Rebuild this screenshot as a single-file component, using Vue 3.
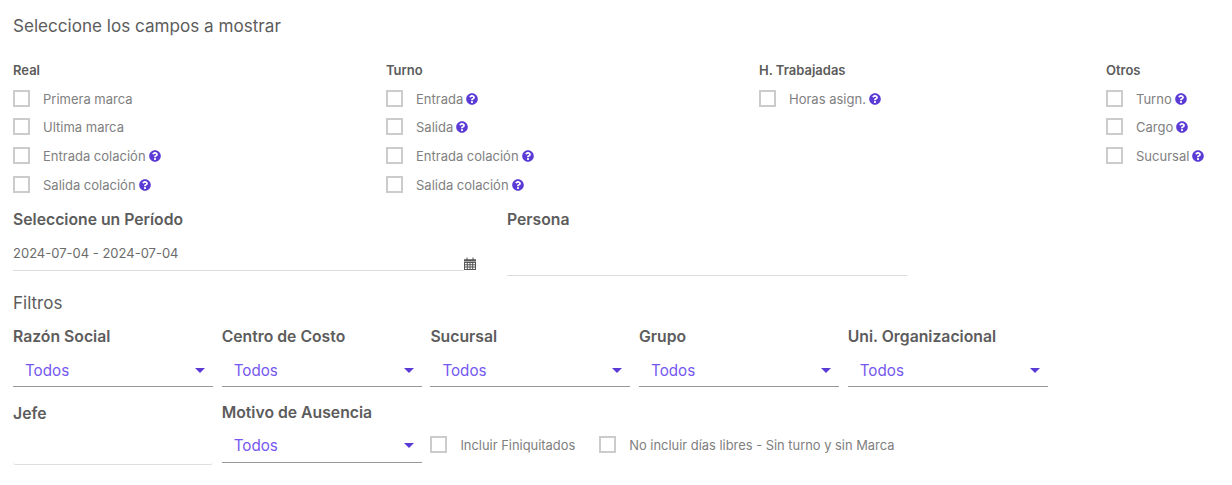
<script setup>
const columns = [
  { title: 'Real', width: 373, items: [['Primera marca', false], ['Ultima marca', false], ['Entrada colación', true], ['Salida colación', true]] },
  { title: 'Turno', width: 373, items: [['Entrada', true], ['Salida', true], ['Entrada colación', true], ['Salida colación', true]] },
  { title: 'H. Trabajadas', width: 347, items: [['Horas asign.', true]] },
  { title: 'Otros', width: 110, items: [['Turno', true], ['Cargo', true], ['Sucursal', true]] },
]
const filters = ['Razón Social', 'Centro de Costo', 'Sucursal', 'Grupo', 'Uni. Organizacional']
</script>

<template>
  <div class="page">
    <h2 class="title">Seleccione los campos a mostrar</h2>
    <div class="cols">
      <div v-for="c in columns" :key="c.title" class="col" :style="{ width: c.width + 'px' }">
        <div class="col-title">{{ c.title }}</div>
        <label v-for="it in c.items" :key="it[0]" class="check">
          <span class="box"></span>
          <span class="check-text">{{ it[0] }}</span>
          <svg v-if="it[1]" class="help" viewBox="0 0 512 512">
            <path fill="#5b3bd6" d="M504 256c0 137-111 248-248 248S8 393 8 256 119 8 256 8s248 111 248 248zM262.700 90c-54.500 0-89.300 23-116.600 63.800-3.500 5.300-2.400 12.400 2.700 16.300l34.700 26.300c5.200 3.900 12.600 3 16.700-2.100 17.900-22.700 30.100-35.800 57.300-35.800 20.400 0 45.700 13.100 45.700 32.900 0 15-12.400 22.700-32.600 34-23.600 13.200-54.800 29.700-54.800 70.900V300c0 6.600 5.400 12 12 12h56c6.600 0 12-5.400 12-12v-1.300c0-28.600 83.500-29.800 83.500-107.200C379.300 133.200 318.800 90 262.700 90zM256 339c-25.500 0-46.200 20.700-46.200 46.200 0 25.500 20.700 46.200 46.200 46.200s46.200-20.700 46.200-46.200c0-25.500-20.700-46.200-46.200-46.200z"/>
          </svg>
        </label>
      </div>
    </div>

    <div class="period-row">
      <div class="period">
        <div class="label">Seleccione un Período</div>
        <div class="date-field">
          <span class="date-input">2024-07-04 - 2024-07-04</span>
          <svg class="cal" viewBox="0 0 12 13">
            <path fill="#555" d="M0 2.200h12V4.500H0zM2.500.6h1v1.800h-1zM8.500.6h1v1.800h-1z"/>
            <path fill="#555" fill-rule="evenodd" d="M0 5h12v8H0zM1 6v1.300h1.800V6zm2.800 0v1.300h1.700V6zm2.700 0v1.300h1.700V6zm2.700 0v1.300H11V6zM1 8.300v1.300h1.800V8.300zm2.800 0v1.300h1.700V8.300zm2.700 0v1.300h1.700V8.300zm2.700 0v1.300H11V8.300zM1 10.600V12h1.800v-1.400zm2.800 0V12h1.700v-1.400zm2.700 0V12h1.700v-1.400zm2.700 0V12H11v-1.400z"/>
          </svg>
        </div>
      </div>
      <div class="persona">
        <div class="label">Persona</div>
        <div class="persona-input"></div>
      </div>
    </div>

    <div class="filtros">Filtros</div>
    <div class="filter-row">
      <div v-for="f in filters" :key="f" class="filter">
        <div class="label">{{ f }}</div>
        <div class="select"><span>Todos</span><i class="caret"></i></div>
      </div>
    </div>

    <div class="filter-row second">
      <div class="filter">
        <div class="label jefe">Jefe</div>
        <div class="jefe-input"></div>
      </div>
      <div class="filter">
        <div class="label">Motivo de Ausencia</div>
        <div class="select low"><span>Todos</span><i class="caret"></i></div>
      </div>
      <div class="extras">
        <label class="check extra one"><span class="box"></span><span class="check-text">Incluir Finiquitados</span></label>
        <label class="check extra two"><span class="box"></span><span class="check-text">No incluir días libres - Sin turno y sin Marca</span></label>
      </div>
    </div>
  </div>
</template>

<style scoped>
.page {
  width: 1232px;
  height: 485px;
  box-sizing: border-box;
  padding: 16px 0 0 13px;
  font-family: Inter, "Liberation Sans", sans-serif;
  color: #5c5c5c;
  background: #fff;
  overflow: hidden;
}
.title {
  margin: 0;
  font-size: 17.100px;
  font-weight: 400;
  line-height: 20px;
  color: #5c5c5c;
}
.cols {
  display: flex;
  margin-top: 26px;
}
.col-title {
  font-size: 13px;
  font-weight: 600;
  line-height: 16px;
  margin-bottom: 5.750px;
}
.check {
  display: flex;
  align-items: center;
  height: 28.700px;
  font-size: 13px;
  color: #808080;
}
.check-text {
  padding-top: 1.200px;
}
.box {
  width: 17px;
  height: 17px;
  box-sizing: border-box;
  border: 2px solid #ccc;
  flex: none;
  margin-right: 13px;
}
.help {
  width: 12px;
  height: 12px;
  margin-left: 3px;
  margin-top: 1px;
  flex: none;
}
.period-row {
  display: flex;
  margin-top: 11.850px;
}
.period {
  width: 494px;
}
.label {
  font-size: 15.750px;
  font-weight: 600;
  line-height: 20px;
  color: #5c5c5c;
}
.date-field {
  display: flex;
  align-items: flex-end;
  margin-top: 13px;
  width: 464px;
}
.date-input {
  display: block;
  width: 451px;
  flex: none;
  height: 28px;
  line-height: 20px;
  font-size: 13px;
  color: #6b6b6b;
  border-bottom: 1px solid #ddd;
  box-sizing: border-box;
}
.cal {
  width: 12px;
  height: 13px;
  flex: none;
  margin-bottom: 1px;
}
.persona {
  width: 400px;
}
.persona-input {
  height: 45px;
  border-bottom: 1px solid #ddd;
}
.filtros {
  font-size: 17px;
  line-height: 20px;
  margin-top: 17px;
}
.filter-row {
  display: flex;
  gap: 8.700px;
  margin-top: 14px;
}
.filter {
  width: 200px;
  flex: none;
}
.select {
  display: flex;
  align-items: center;
  justify-content: space-between;
  height: 36px;
  box-sizing: border-box;
  margin-top: 4px;
  padding: 3px 8px 0 12px;
  font-size: 15.200px;
  color: #7558f0;
  border-bottom: 1px solid #999;
}
.select.low {
  padding-top: 1px;
}
.caret {
  width: 0;
  height: 0;
  border-left: 5px solid transparent;
  border-right: 5px solid transparent;
  border-top: 5px solid #5b3bd6;
}
.second {
  margin-top: 16px;
}
.jefe {
  padding-top: 1px;
}
.jefe-input {
  height: 39px;
  margin-top: 1px;
  border-bottom: 1px solid #ddd;
  border-radius: 0 0 3px 3px;
}
.extras {
  display: flex;
  align-items: center;
  margin-top: 23px;
  height: 37px;
}
.extra {
  height: 37px;
  font-size: 12.900px;
}
.extra.one {
  margin-right: 24px;
}
</style>
